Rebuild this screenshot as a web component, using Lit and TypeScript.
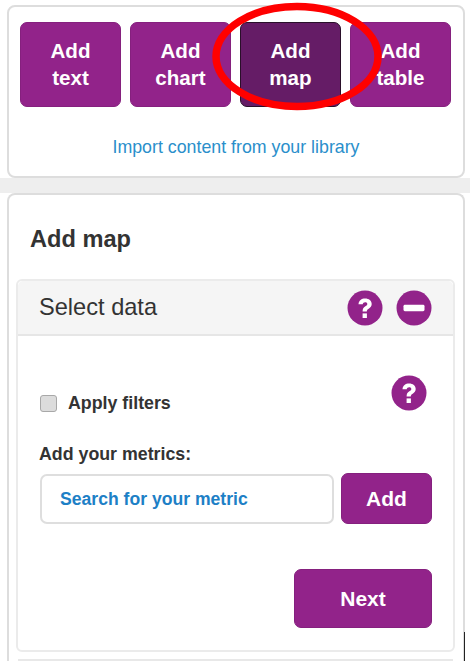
import { LitElement, html, css, svg } from 'lit';
import { customElement } from 'lit/decorators.js';

const questionIcon = svg`
  <circle cx="18" cy="18" r="17.5" fill="#92238a"></circle>
  <path d="M11.5 14.2c.3-3.6 3-5.6 6.6-5.6 3.8 0 6.6 2.2 6.6 5.4 0 2.4-1.3 3.6-3 4.7-1.4.9-1.9 1.4-1.9 2.9h-4.2c0-2.9.8-4.1 2.8-5.4 1.3-.8 1.9-1.4 1.9-2.3 0-1-.9-1.7-2.1-1.7-1.4 0-2.3.8-2.5 2.1z" fill="#fff"></path>
  <rect x="15.6" y="23.4" width="4.3" height="4.6" fill="#fff"></rect>
`;

const minusIcon = svg`
  <circle cx="18" cy="18" r="17.5" fill="#92238a"></circle>
  <rect x="7.5" y="14.8" width="21" height="6.4" rx="1.4" fill="#fff"></rect>
`;

@customElement('app-root')
export class AppRoot extends LitElement {
  static styles = css`
    :host {
      display: block;
      position: relative;
      width: 470px;
      height: 665px;
      overflow: hidden;
      background: #ffffff;
      font-family: 'Liberation Sans', Arial, sans-serif;
      color: #333333;
    }

    .page {
      display: flex;
      flex-direction: column;
      width: 458px;
      height: 661px;
      margin-left: 7px;
      padding-top: 5px;
      box-sizing: border-box;
    }

    .card {
      flex: none;
      background: #ffffff;
      border: 2px solid #dddddd;
      border-radius: 8px;
      box-sizing: border-box;
    }

    .top-card {
      height: 173px;
      padding: 15px 11px 0;
      text-align: center;
    }

    .gutter {
      flex: none;
      height: 15px;
      margin: 0 -7px;
      background: #eeeeee;
    }

    .tiles {
      display: flex;
      gap: 9px;
    }

    .btn {
      display: flex;
      align-items: center;
      justify-content: center;
      border: 1px solid #85207e;
      border-radius: 7px;
      background: #92238a;
      color: #ffffff;
      font-weight: 700;
      box-sizing: border-box;
    }

    .tile {
      width: 101px;
      height: 85px;
      padding-bottom: 2px;
      font-size: 20.6px;
      line-height: 27px;
      text-align: center;
    }

    .tile.active {
      background: #651c66;
      border-color: #2a0f2a;
    }

    .import {
      margin-top: 29px;
      color: #2a8fcb;
      font-size: 17.8px;
      line-height: 22px;
    }

    .main-card {
      flex: 1;
      padding: 0 8px 0 7px;
      border-bottom: none;
      border-radius: 8px 8px 0 0;
    }

    h2 {
      margin: 0;
      padding: 29px 0 25px 14px;
      font-size: 23.6px;
      line-height: 30px;
      font-weight: 700;
      color: #333333;
    }

    .panel {
      height: 373px;
      border: 2px solid #ebebeb;
      border-radius: 6px;
      box-sizing: border-box;
    }

    .panel-head {
      display: flex;
      align-items: center;
      height: 55px;
      padding: 0 21px 0 21px;
      background: #f5f5f5;
      border-bottom: 2px solid #e6e6e6;
      border-radius: 5px 5px 0 0;
      box-sizing: border-box;
      font-size: 23.6px;
    }

    .panel-head .name {
      flex: 1;
    }

    .head-icons {
      display: flex;
      gap: 13px;
    }

    .icon {
      display: block;
      width: 36px;
      height: 36px;
    }

    .panel-body {
      padding: 39px 21px 0;
    }

    .filter-row {
      display: flex;
      align-items: center;
      height: 36px;
    }

    .check {
      width: 17px;
      height: 17px;
      margin: 21px 11px 0 1px;
      background: #dcdcdc;
      border: 1px solid #a8a8a8;
      border-radius: 3px;
      box-sizing: border-box;
    }

    .filter-label {
      flex: 1;
      margin-top: 20px;
      font-size: 17.8px;
      font-weight: 700;
    }

    .filter-row .icon {
      margin-right: 5px;
    }

    .metrics-label {
      margin-top: 31px;
      font-size: 17.8px;
      line-height: 24px;
      font-weight: 700;
    }

    .metric-row {
      display: flex;
      gap: 7px;
      margin-top: 7px;
    }

    .search {
      display: flex;
      align-items: center;
      width: 294px;
      height: 50px;
      margin: 1px 0 0 1px;
      padding-left: 18px;
      border: 2px solid #dedede;
      border-radius: 7px;
      box-sizing: border-box;
      color: #1d80c6;
      font-size: 17.6px;
      font-weight: 700;
    }

    .add {
      width: 91px;
      height: 51px;
      font-size: 21px;
    }

    .next-row {
      display: flex;
      justify-content: flex-end;
      margin-top: 45px;
    }

    .next {
      width: 138px;
      height: 59px;
      font-size: 21px;
    }

    .next-panel {
      height: 2px;
      margin: 7px 2px 0;
      background: #e8e8e8;
    }

    .annotation {
      position: absolute;
      top: 0;
      left: 0;
      width: 470px;
      height: 120px;
      pointer-events: none;
    }

    .edge {
      position: absolute;
      left: 464px;
      top: 632px;
      width: 1px;
      height: 29px;
      background: #222222;
    }
  `;

  render() {
    return html`
      <div class="page">
        <section class="card top-card">
          <div class="tiles">
            <div class="btn tile">Add<br />text</div>
            <div class="btn tile">Add<br />chart</div>
            <div class="btn tile active">Add<br />map</div>
            <div class="btn tile">Add<br />table</div>
          </div>
          <div class="import">Import content from your library</div>
        </section>
        <div class="gutter"></div>
        <section class="card main-card">
          <h2>Add map</h2>
          <div class="panel">
            <div class="panel-head">
              <span class="name">Select data</span>
              <div class="head-icons">
                <svg class="icon" viewBox="0 0 36 36">${questionIcon}</svg>
                <svg class="icon" viewBox="0 0 36 36">${minusIcon}</svg>
              </div>
            </div>
            <div class="panel-body">
              <div class="filter-row">
                <span class="check"></span>
                <span class="filter-label">Apply filters</span>
                <svg class="icon" viewBox="0 0 36 36">${questionIcon}</svg>
              </div>
              <div class="metrics-label">Add your metrics:</div>
              <div class="metric-row">
                <div class="search">Search for your metric</div>
                <div class="btn add">Add</div>
              </div>
              <div class="next-row">
                <div class="btn next">Next</div>
              </div>
            </div>
          </div>
          <div class="next-panel"></div>
        </section>
      </div>
      <svg class="annotation" viewBox="0 0 470 120">
        <ellipse cx="297" cy="56.5" rx="81" ry="50" fill="none" stroke="#ff0000" stroke-width="7.5"></ellipse>
      </svg>
      <div class="edge"></div>
    `;
  }
}
